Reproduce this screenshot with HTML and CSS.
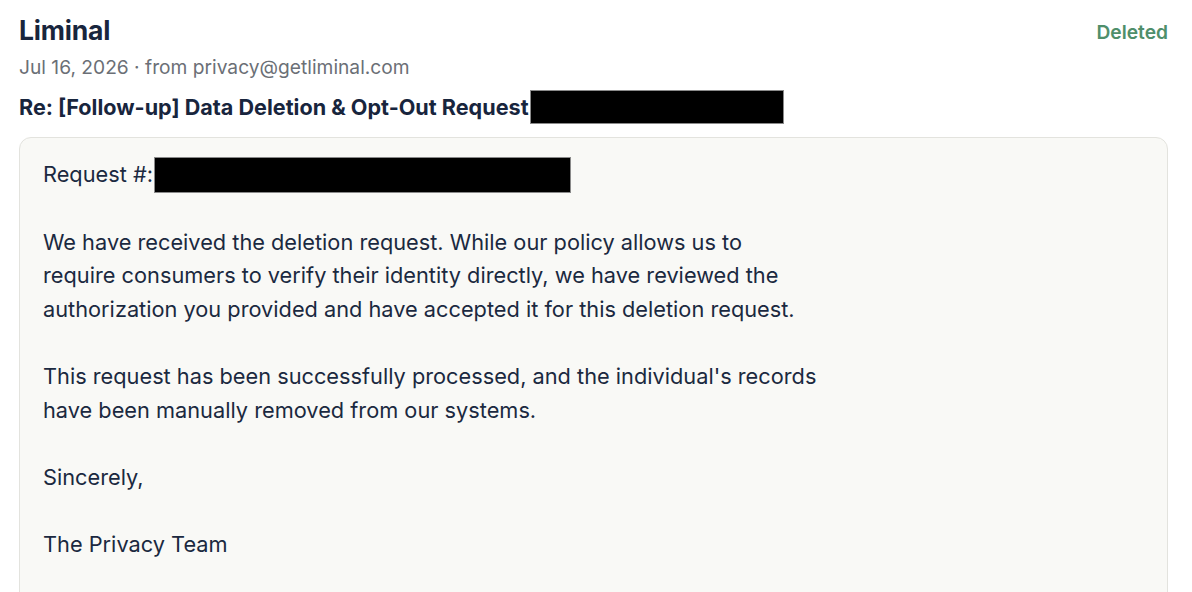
FILE: index.html
```html
<!DOCTYPE html>
<html>
<head>
<meta charset="utf-8">
<link rel="stylesheet" href="styles.css">
</head>
<body>
<div class="page">
  <div class="header">
    <div class="sender">Liminal</div>
    <div class="status">Deleted</div>
  </div>
  <div class="meta">Jul 16, 2026 · from privacy@getliminal.com</div>
  <div class="subject">Re: [Follow-up] Data Deletion &amp; Opt-Out Request<span class="redact redact-subject"></span></div>
  <div class="message">
    <p class="line">Request #:<span class="redact redact-id"></span></p>
    <p>We have received the deletion request. While our policy allows us to<br>require consumers to verify their identity directly, we have reviewed the<br>authorization you provided and have accepted it for this deletion request.</p>
    <p>This request has been successfully processed, and the individual's records<br>have been manually removed from our systems.</p>
    <p>Sincerely,</p>
    <p>The Privacy Team</p>
  </div>
</div>
</body>
</html>
```
FILE: styles.css
```css
html, body {
  margin: 0;
  padding: 0;
  background: #ffffff;
}
body {
  font-family: Inter, "Noto Sans", sans-serif;
  color: #1b2940;
}
.page {
  padding: 14px 24px 0 19px;
}
.header {
  display: flex;
  justify-content: space-between;
  align-items: center;
  height: 32px;
}
.sender {
  font-size: 26.5px;
  font-weight: 700;
  line-height: 32px;
  color: #18253d;
  letter-spacing: -0.2px;
}
.status {
  font-size: 19.2px;
  font-weight: 600;
  color: #4f8f6b;
  margin-top: 4px;
}
.meta {
  margin-top: 6px;
  font-size: 19.2px;
  line-height: 30px;
  color: #6b6f76;
}
.subject {
  margin-top: 8px;
  font-size: 21.6px;
  font-weight: 700;
  line-height: 34px;
  color: #18253d;
  display: flex;
  align-items: center;
}
.redact {
  display: inline-block;
  background: #000;
  border: 1px solid #8a8a8a;
  box-sizing: border-box;
}
.redact-subject {
  width: 254px;
  height: 34px;
  margin-left: 1px;
}
.redact-id {
  width: 417px;
  height: 36px;
  margin-left: 1px;
}
.message {
  margin-top: 13px;
  background: #f9f9f6;
  border: 1px solid #e3e3de;
  border-radius: 12px;
  padding: 20px 23px 30px;
  font-size: 21.75px;
  line-height: 33.6px;
  color: #1b2940;
  min-height: 480px;
}
.message p {
  margin: 0 0 33.6px 0;
}
.message .line {
  display: flex;
  align-items: center;
  height: 34px;
}
```
